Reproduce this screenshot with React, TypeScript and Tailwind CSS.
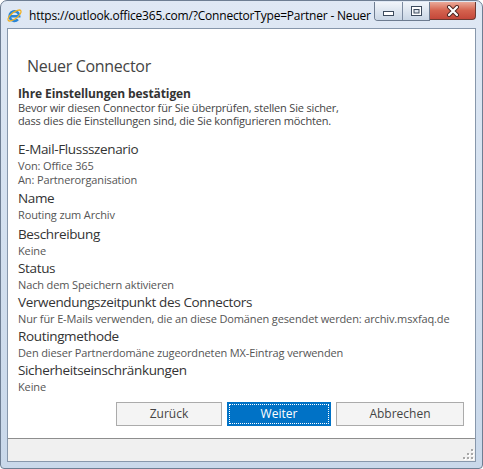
import { Fragment } from 'react';

/** One summary entry of the connector wizard: a caption and its value lines. */
interface Field {
  label: string;
  values: string[];
  extra?: string;
}

const FIELDS: Field[] = [
  { label: 'E-Mail-Flussszenario', values: ['Von: Office 365', 'An: Partnerorganisation'], extra: 'mb-[1px]' },
  { label: 'Name', values: ['Routing zum Archiv'], extra: 'mb-[2px]' },
  { label: 'Beschreibung', values: ['Keine'] },
  { label: 'Status', values: ['Nach dem Speichern aktivieren'] },
  {
    label: 'Verwendungszeitpunkt des Connectors',
    values: ['Nur für E-Mails verwenden, die an diese Domänen gesendet werden: archiv.msxfaq.de'],
  },
  { label: 'Routingmethode', values: ['Den dieser Partnerdomäne zugeordneten MX-Eintrag verwenden'] },
  { label: 'Sicherheitseinschränkungen', values: ['Keine'] },
];

function IeIcon() {
  return (
    <svg width="17" height="17" viewBox="0 0 17 17" className="shrink-0">
      <path d="M3.6 9.2 H13.2 A4.8 4.8 0 1 0 11.9 12.4" fill="none" stroke="#2b86d6" strokeWidth="2.6" />
      <ellipse cx="8.5" cy="8.5" rx="8" ry="3.1" transform="rotate(-38 8.5 8.5)" fill="none" stroke="#f0b020" strokeWidth="1.3" />
    </svg>
  );
}

function CaptionButtons() {
  return (
    <div className="flex self-start mt-[1px] mr-[6px]">
      <div className="flex rounded-bl-[4px] border border-t-0 border-[#6d7c90] overflow-hidden">
        <div className="w-[28px] h-[18px] flex items-end justify-center pb-[4px] bg-linear-to-b from-[#f1f5fa] to-[#c9d6e5] border-r border-[#7c8ba0]">
          <svg width="11" height="5" viewBox="0 0 11 5">
            <rect x="0.5" y="0.5" width="10" height="4" fill="#fff" stroke="#3d4b5d" />
          </svg>
        </div>
        <div className="w-[26px] h-[18px] flex items-center justify-center bg-linear-to-b from-[#f1f5fa] to-[#c9d6e5]">
          <svg width="11" height="10" viewBox="0 0 11 10">
            <rect x="0.5" y="0.5" width="10" height="9" fill="#fff" stroke="#3d4b5d" />
            <rect x="3" y="3.5" width="5" height="3.5" fill="#dfe6ee" stroke="#3d4b5d" />
          </svg>
        </div>
      </div>
      <div className="w-[46px] h-[18px] flex items-center justify-center rounded-br-[4px] border border-t-0 border-l-0 border-[#6d3a32] bg-linear-to-b from-[#e9a999] via-[#d4624e] to-[#c4473a]">
        <svg width="14" height="12" viewBox="0 0 14 12">
          <path d="M3 2 L11 10 M11 2 L3 10" stroke="#4a2420" strokeWidth="4" strokeLinecap="round" />
          <path d="M3 2 L11 10 M11 2 L3 10" stroke="#fff" strokeWidth="2.2" strokeLinecap="round" />
        </svg>
      </div>
    </div>
  );
}

function ResizeGrip() {
  const dots = [
    [8, 0],
    [8, 4],
    [4, 4],
    [8, 8],
    [4, 8],
    [0, 8],
  ];
  return (
    <svg width="11" height="11" viewBox="0 0 11 11">
      {dots.map(([x, y]) => (
        <Fragment key={`${x}-${y}`}>
          <rect x={x + 1} y={y + 1} width="2" height="2" fill="#fff" />
          <rect x={x} y={y} width="2" height="2" fill="#a8a8a8" />
        </Fragment>
      ))}
    </svg>
  );
}

export default function App() {
  return (
    <div className="w-[483px] h-[469px] flex flex-col rounded-t-[7px] rounded-b-[4px] border border-[#6e7e93] bg-linear-to-b from-[#dfe8f4] via-[#d3e0ef] to-[#c9d8ea] font-['Segoe_UI','Open_Sans',sans-serif] overflow-hidden">
      {/* title bar */}
      <div className="h-[27px] flex items-center shrink-0">
        <div className="pl-[5px] pr-[6px] pt-[2px]">
          <IeIcon />
        </div>
        <div className="flex-1 min-w-0 overflow-hidden whitespace-nowrap text-[12px] leading-[16px] tracking-[-0.2px] text-black pt-[2px]">
          https://outlook.office365.com/?ConnectorType=Partner - Neuer
        </div>
        <CaptionButtons />
      </div>

      {/* client area */}
      <div className="flex-1 flex flex-col mx-[6px] mb-[6px] border border-[#8797ab]">
        <div className="flex-1 flex flex-col bg-white pl-[10px] pr-[10px] pt-[27px]">
          <h1 className="pl-[9px] text-[16px] leading-[21px] tracking-[-0.3px] text-[#444]">Neuer Connector</h1>

          <p className="mt-[10px] text-[12px] leading-[14px] tracking-[-0.1px] font-bold text-[#333]">
            Ihre Einstellungen bestätigen
          </p>
          <p className="text-[11px] leading-[13px] tracking-[-0.18px] text-[#444]">
            Bevor wir diesen Connector für Sie überprüfen, stellen Sie sicher,
            <br />
            dass dies die Einstellungen sind, die Sie konfigurieren möchten.
          </p>

          <div className="mt-[12px] flex flex-col">
            {FIELDS.map((f) => (
              <div key={f.label} className={f.extra}>
                <p className="text-[13.5px] leading-[20px] tracking-[-0.35px] text-[#333]">{f.label}</p>
                {f.values.map((v) => (
                  <p key={v} className="text-[11px] leading-[14px] tracking-[-0.13px] text-[#555]">
                    {v}
                  </p>
                ))}
              </div>
            ))}
          </div>

          <div className="mt-[8px] flex justify-end gap-[5px] pr-[1px] text-[12px]">
            <button className="w-[106px] h-[24px] border border-[#ababab] bg-[#f4f4f4] text-[#444]">Zurück</button>
            <button className="w-[104px] h-[24px] p-[2px] bg-[#0072c6] text-white">
              <span className="w-full h-full flex items-center justify-center border border-dotted border-white">Weiter</span>
            </button>
            <button className="w-[128px] h-[24px] border border-[#ababab] bg-[#f4f4f4] text-[#444]">Abbrechen</button>
          </div>
        </div>

        {/* status bar */}
        <div className="h-[23px] shrink-0 flex items-end justify-end border-t border-[#8e8e8e] bg-[#f0f0f0] pr-[1px] pb-[1px]">
          <ResizeGrip />
        </div>
      </div>
    </div>
  );
}
